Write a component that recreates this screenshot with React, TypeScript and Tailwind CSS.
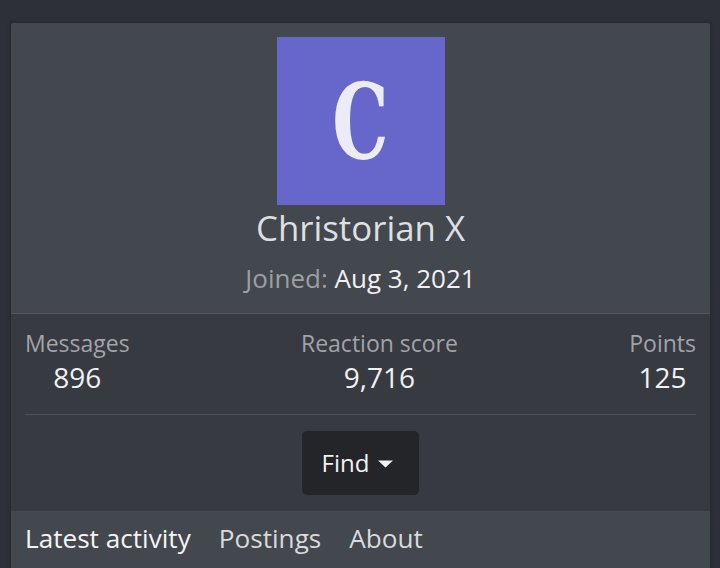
import React from "react";

export default function App() {
  const font = { fontFamily: '"Open Sans", "Noto Sans", sans-serif' };
  return (
    <div className="min-h-[568px] w-full bg-[#2d3038] pt-[23px]" style={font}>
      <div className="ml-[11px] mr-[10px] rounded-t-[3px] bg-[#373a41] shadow-[0_0_4px_rgba(0,0,0,0.3)]">
        {/* header */}
        <div className="flex flex-col items-center bg-[#43474e] pt-[14px] pb-[17px] rounded-t-[3px]">
          <div className="flex h-[168px] w-[168px] items-center justify-center bg-[#6767cb]">
            <span
              className="block scale-x-[0.68] text-[104px] font-bold leading-none text-[#ececf8] translate-y-[2px]"
              style={{ fontFamily: '"DejaVu Serif", "Liberation Serif", serif' }}
            >
              C
            </span>
          </div>
          <div className="text-[34.8px] leading-[45px] text-[#dedfe0]">Christorian X</div>
          <div className="mt-[10px] text-[26px] leading-[36px]">
            <span className="text-[#9d9fa3]">Joined:</span>{" "}
            <span className="text-[#f1f1f1]">Aug 3, 2021</span>
          </div>
        </div>
        <div className="h-px bg-[#53575d]" />
        {/* stats */}
        <div className="px-[14px]">
          <div className="flex justify-between pt-[13px] pb-[19px]">
            <Stat label="Messages" value="896" />
            <Stat label="Reaction score" value="9,716" />
            <Stat label="Points" value="125" />
          </div>
          <div className="h-px bg-[#4d5157]" />
          <div className="flex justify-center py-[16px]">
            <button className="flex h-[64px] w-[117px] items-center justify-center gap-[9px] rounded-[5px] bg-[#232529] pr-[6px] text-[24px] text-[#f2f2f2]">
              <span className="leading-none">Find</span>
              <svg width="15" height="8" viewBox="0 0 15 8" className="mt-[2px]">
                <path d="M0 0.5 H15 L7.5 7.5 Z" fill="#f2f2f2" />
              </svg>
            </button>
          </div>
        </div>
        {/* tabs */}
        <div className="flex bg-[#43474e] pt-[8px] pb-[12px]">
          <div className="px-[14px] text-[26.15px] leading-[39px] text-[#f4f4f4]">Latest activity</div>
          <div className="px-[14px] text-[26.15px] leading-[39px] text-[#d9dadb]">Postings</div>
          <div className="px-[14px] text-[26.15px] leading-[39px] text-[#d9dadb]">About</div>
        </div>
      </div>
    </div>
  );
}

function Stat({ label, value }: { label: string; value: string }) {
  return (
    <div className="flex flex-col items-center">
      <div className="text-[23px] leading-[32px] text-[#a2a4a8]">{label}</div>
      <div className="text-[28px] leading-[36px] text-[#f1f1f1]">{value}</div>
    </div>
  );
}
